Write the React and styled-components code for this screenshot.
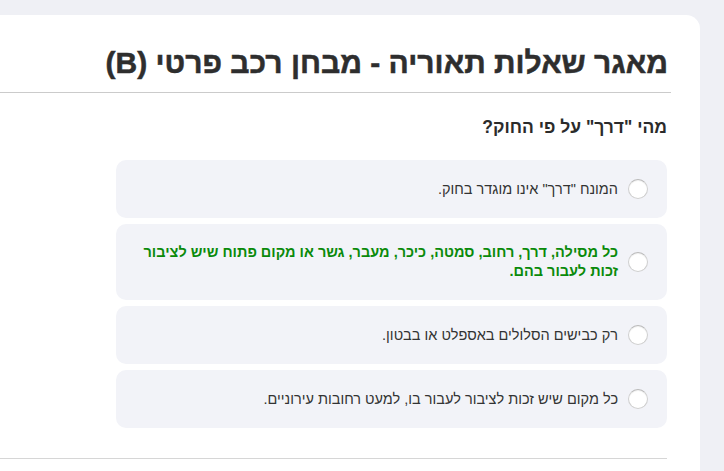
import React from 'react';
import styled, { createGlobalStyle } from 'styled-components';

const GlobalStyle = createGlobalStyle`
  html, body {
    margin: 0;
    padding: 0;
    overflow: hidden;
    background: #eff0f5;
  }

  body {
    font-family: 'Liberation Sans', Arial, sans-serif;
    direction: rtl;
    color: #333;
  }
`;

const Page = styled.div`
  padding-top: 15px;
  padding-right: 24px;
`;

const Card = styled.div`
  background: #fff;
  border-radius: 14px 14px 0 0;
  margin-left: -90px;
  padding: 30px 29px 0 0;
  min-height: 460px;
`;

const Title = styled.h1`
  margin: 0;
  padding: 0 3px 11px 0;
  font-size: 30px;
  line-height: 36px;
  font-weight: 700;
  color: #2e2e2e;
  -webkit-text-stroke: 0.5px #2e2e2e;
  border-bottom: 1px solid #cbcbcb;
`;

const Question = styled.section`
  padding: 23px 4px 0 0;
`;

const QuestionText = styled.h2`
  margin: 0 0 22px;
  font-size: 17.5px;
  line-height: 22px;
  font-weight: 700;
  color: #2b2b2b;
`;

const Options = styled.ul`
  list-style: none;
  margin: 0 0 0 auto;
  padding: 0;
  width: 551px;
  display: flex;
  flex-direction: column;
  gap: 6px;
`;

const Option = styled.li`
  display: flex;
  align-items: center;
  gap: 10px;
  padding: 19px 19px 19px 24px;
  background: #f2f3f8;
  border-radius: 10px;
`;

const Radio = styled.span`
  flex: none;
  width: 20px;
  height: 20px;
  box-sizing: border-box;
  border-radius: 50%;
  border: 1px solid #cfcfcf;
  border-top-color: #b9b9b9;
  background: #fff;
  box-shadow: inset 0 1px 1px rgba(0, 0, 0, 0.06);
`;

const Label = styled.span`
  font-size: 14.5px;
  line-height: 19px;
  color: ${(p) => (p.$correct ? '#0a8a0a' : '#333')};
  font-weight: ${(p) => (p.$correct ? 700 : 400)};
`;

const Divider = styled.hr`
  margin: 30px 0 0;
  border: 0;
  border-top: 1px solid #d6d6d6;
`;

const answers = [
  { text: 'המונח "דרך" אינו מוגדר בחוק.' },
  {
    text: 'כל מסילה, דרך, רחוב, סמטה, כיכר, מעבר, גשר או מקום פתוח שיש לציבור זכות לעבור בהם.',
    correct: true,
  },
  { text: 'רק כבישים הסלולים באספלט או בבטון.' },
  { text: 'כל מקום שיש זכות לציבור לעבור בו, למעט רחובות עירוניים.' },
];

export default function App() {
  return (
    <>
      <GlobalStyle />
      <Page>
        <Card>
          <Title>מאגר שאלות תאוריה - מבחן רכב פרטי (B)</Title>
          <Question>
            <QuestionText>מהי "דרך" על פי החוק?</QuestionText>
            <Options>
              {answers.map((a) => (
                <Option key={a.text}>
                  <Radio />
                  <Label $correct={a.correct}>{a.text}</Label>
                </Option>
              ))}
            </Options>
            <Divider />
          </Question>
        </Card>
      </Page>
    </>
  );
}
